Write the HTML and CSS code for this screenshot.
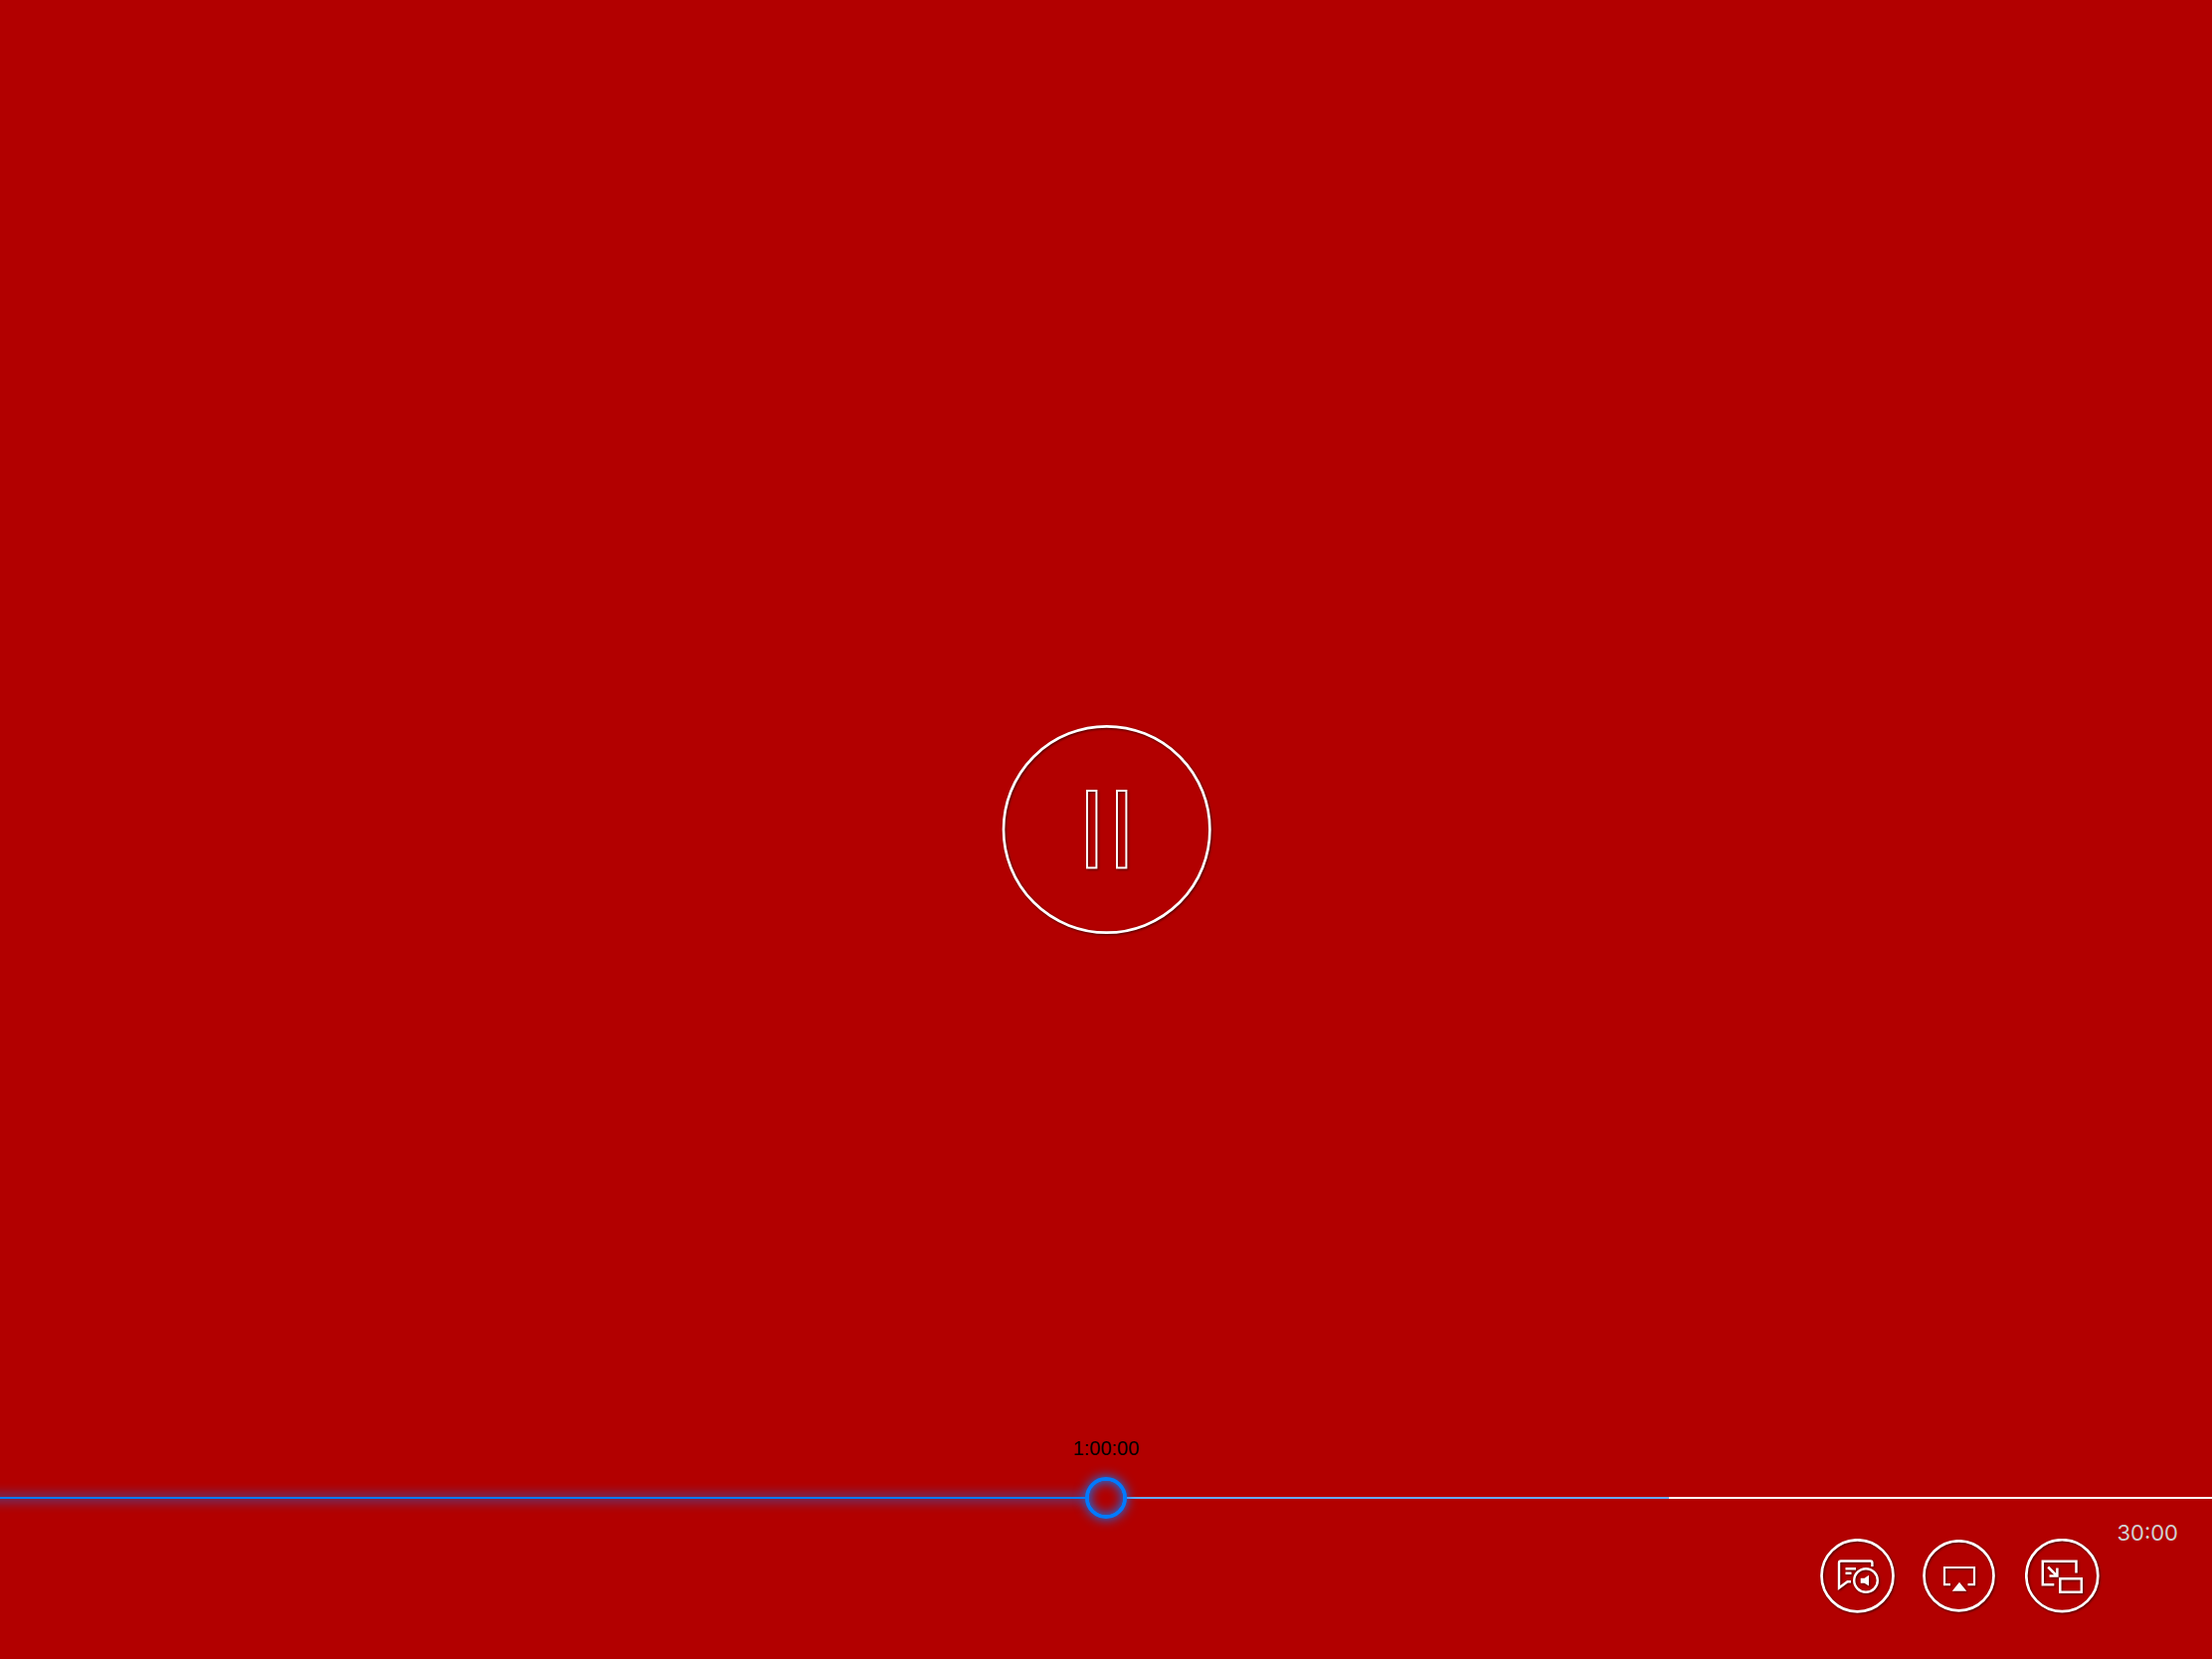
FILE: index.html
```html
<!DOCTYPE html>
<html lang="en">
<head>
<meta charset="utf-8">
<meta name="viewport" content="width=device-width, initial-scale=1">
<title>Video player</title>
<link rel="stylesheet" href="styles.css">
</head>
<body>
<main class="player">
  <button class="icon-button play-toggle" type="button" aria-label="Pause">
    <svg width="212" height="212" viewBox="0 0 212 212" fill="none" stroke="#fff">
      <circle cx="106.7" cy="106" r="103.7" stroke-width="2.7"/>
      <path d="M87 67h9.4v77.6H87zM117 67h9.4v77.6H117z" stroke-width="2"/>
    </svg>
  </button>

  <footer class="controls">
    <label class="elapsed" for="seek">1:00:00</label>
    <div class="timeline">
      <div class="track">
        <div class="played"></div>
        <div class="buffered"></div>
        <div class="remaining"></div>
      </div>
      <input class="seek" id="seek" type="range" min="0" max="100" value="50">
    </div>
    <div class="bottom-row">
      <div class="actions">
        <button class="icon-button" type="button" aria-label="Audio and subtitles">
          <svg width="75" height="75" viewBox="0 0 75 75" fill="none" stroke="#fff" stroke-width="2.4">
            <circle cx="37.5" cy="37.3" r="36" stroke-width="2.7"/>
            <path d="M52.4 28V24.5Q52.4 22.5 50.6 22.5H20.8Q19 22.5 19 24.5V49.5L27.5 43.2H31"/>
            <path d="M25.5 30.3H36M25.5 34.8H31.5"/>
            <circle cx="46" cy="42" r="11.8"/>
            <path d="M40.7 39.7H44.5L49 36.7V47.5L44.5 44.7H40.7Z" fill="#fff" stroke="none"/>
          </svg>
        </button>
        <button class="icon-button" type="button" aria-label="AirPlay">
          <svg width="75" height="73" viewBox="0 0 75 73" fill="none" stroke="#fff" stroke-width="2.2">
            <circle cx="36.5" cy="36.3" r="35" stroke-width="2.7"/>
            <path d="M28 45.2H22V28H52V45.2H45.5"/>
            <path d="M37 42.7L44.3 51.7H29.7Z" fill="#fff" stroke="none"/>
          </svg>
        </button>
        <button class="icon-button" type="button" aria-label="Picture in picture">
          <svg width="75" height="75" viewBox="0 0 75 75" fill="none" stroke="#fff" stroke-width="2.5">
            <circle cx="37.3" cy="37.2" r="36" stroke-width="2.7"/>
            <path d="M29.3 46.2H17.8V22.8H51.5V34.5"/>
            <path d="M23.2 28.5L32 37.3M32.4 29.5V37.4H24.5"/>
            <path d="M35.3 40.3H56.8V53.7H35.3Z"/>
          </svg>
        </button>
      </div>
      <time class="left-time">30:00</time>
    </div>
  </footer>
</main>
</body>
</html>
```
FILE: styles.css
```css
* {
  box-sizing: border-box;
}

body {
  margin: 0;
  background: #b20000;
}

.player {
  display: grid;
  min-height: 100vh;
}

.icon-button {
  display: block;
  padding: 0;
  border: 0;
  background: none;
  cursor: pointer;
}

.icon-button svg {
  display: block;
  filter: drop-shadow(1px 1px 1px rgba(0, 0, 0, 0.6));
}

.play-toggle {
  grid-area: 1 / 1;
  place-self: center;
}

.controls {
  grid-area: 1 / 1;
  align-self: end;
  display: flex;
  flex-direction: column;
  padding-bottom: 46px;
}

.elapsed {
  align-self: center;
  margin-bottom: 17px;
  font: 20px/24px "Liberation Sans", Arial, sans-serif;
  color: #000;
}

.timeline {
  display: grid;
  align-items: center;
  overflow: hidden;
  padding: 16px 0;
  margin: -16px 0;
}

.track,
.seek {
  grid-area: 1 / 1;
}

.track {
  display: flex;
  height: 2px;
}

/* Starts past the left edge so that the glow does not fade out there. */
.played {
  width: 50%;
  margin: 0 41px 0 -20px;
  background: #007aff;
  box-shadow: 0 0 12px 1px #007aff;
}

.buffered {
  width: calc(25.5% - 22px);
  background: #66a9ff;
}

.remaining {
  flex: 1;
  background: #fff;
}

.seek {
  -webkit-appearance: none;
  appearance: none;
  width: 100%;
  height: 42px;
  margin: 0;
  background: none;
}

.seek::-webkit-slider-thumb {
  -webkit-appearance: none;
  width: 42px;
  height: 42px;
  border: 4px solid #007aff;
  border-radius: 50%;
  background: #b20000;
  box-shadow: 0 0 12px #007aff, inset 0 0 12px #007aff;
}

.bottom-row {
  display: flex;
  justify-content: flex-end;
  align-items: flex-start;
  gap: 17px;
  padding: 2px 34px 0 0;
}

.actions {
  display: flex;
  align-items: center;
  gap: 28px;
  padding-top: 18px;
}

.left-time {
  font: 22px/24px Inter, sans-serif;
  color: #d0d0d0;
}
```
